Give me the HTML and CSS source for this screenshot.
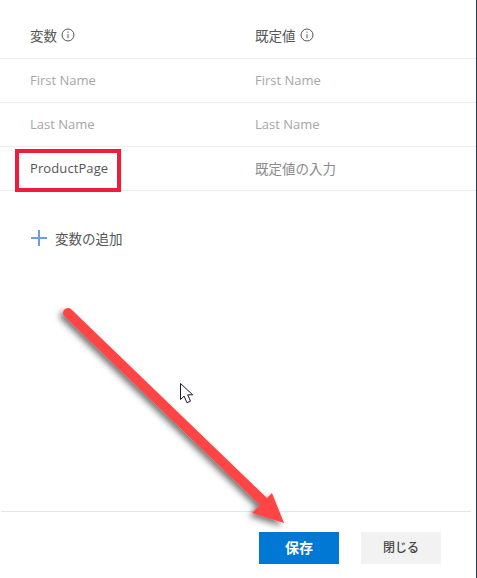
FILE: index.html
```html
<!DOCTYPE html>
<html lang="ja">
<head>
  <meta charset="UTF-8">
  <title>変数</title>
  <link rel="stylesheet" href="styles.css">
</head>
<body>
  <div class="panel">
    <div class="row head">
      <div class="cell"><span class="ja">変数</span>
        <svg class="info" viewBox="0 0 14 14"><circle cx="7" cy="7" r="6" /><path d="M7 6.2v4M7 3.6v1.2" /></svg>
      </div>
      <div class="cell"><span class="ja">既定値</span>
        <svg class="info" viewBox="0 0 14 14"><circle cx="7" cy="7" r="6" /><path d="M7 6.2v4M7 3.6v1.2" /></svg>
      </div>
    </div>
    <div class="row">
      <div class="cell hint">First Name</div>
      <div class="cell hint">First Name</div>
    </div>
    <div class="row">
      <div class="cell hint">Last Name</div>
      <div class="cell hint">Last Name</div>
    </div>
    <div class="row">
      <div class="cell value">ProductPage</div>
      <div class="cell hint dark ja">既定値の入力</div>
    </div>

    <div class="add">
      <svg class="plus" viewBox="0 0 16 16"><path d="M8 0v16M0 8h16" /></svg>
      <span class="ja">変数の追加</span>
    </div>

    <div class="footer">
      <button class="btn primary">保存</button>
      <button class="btn">閉じる</button>
    </div>
  </div>

  <!-- annotations drawn on top of the screenshot -->
  <div class="mark"></div>
  <svg class="overlay" viewBox="0 0 477 578">
    <defs>
      <filter id="shadow" x="-20%" y="-20%" width="140%" height="140%">
        <feDropShadow dx="-3" dy="3" stdDeviation="3" flood-color="#000" flood-opacity="0.55" />
      </filter>
    </defs>
    <path class="cursor" d="M180.5 383.5v16l3.6-3.4 2.8 6.6 3.6-1.5-2.8-6.4h5z" />
    <g filter="url(#shadow)">
      <path class="shaft" d="M68 313L265 503" />
      <path class="tip" d="M272 493L284 523L252 513z" />
    </g>
  </svg>
</body>
</html>
```

FILE: styles.css
```css
html, body {
  margin: 0;
  height: 100%;
  overflow: hidden;
  background: #fff;
}
body {
  position: relative;
  font-family: "Open Sans", "Noto Sans CJK JP", sans-serif;
  font-size: 13px;
  color: #555;
}
.ja {
  font-size: 13.5px;
}
.panel {
  display: flex;
  flex-direction: column;
  height: 578px;
  box-sizing: border-box;
  border-right: 1px solid #1d3a4e;
}
.row {
  display: grid;
  grid-template-columns: 225px 1fr;
  align-items: center;
  height: 44px;
  padding: 0 0 2px 30px;
  border-bottom: 1px solid #ececec;
  box-sizing: border-box;
}
.head {
  height: 59px;
  padding: 11px 0 0 30px;
}
.cell {
  display: flex;
  align-items: center;
  gap: 4px;
}
.hint {
  color: #a6a6a6;
}
.hint.dark {
  color: #8a8a8a;
}
.value {
  color: #555;
  letter-spacing: 0.1px;
}
.info {
  width: 14px;
  height: 14px;
  fill: none;
  stroke: #555;
  stroke-width: 1;
}
.add {
  display: flex;
  align-items: center;
  gap: 8px;
  margin: 38px 0 0 31px;
  height: 17px;
}
.plus {
  width: 16px;
  height: 16px;
  margin-top: 1px;
  fill: none;
  stroke: #6f9be8;
  stroke-width: 2;
}
.footer {
  display: flex;
  justify-content: flex-end;
  gap: 22px;
  margin: auto 5px 0 1px;
  padding: 20px 30px 14px 0;
  border-top: 1px solid #e6e6e6;
}
.btn {
  width: 80px;
  height: 32px;
  border: none;
  background: #f2f2f2;
  color: #444;
  font: inherit;
  font-size: 12px;
  font-weight: 500;
  padding: 0 0 2px;
}
.btn.primary {
  background: #0078d4;
  color: #fff;
  font-size: 14px;
  font-weight: 700;
}
.mark {
  position: absolute;
  left: 15px;
  top: 149px;
  width: 106px;
  height: 43px;
  box-sizing: border-box;
  border: 4px solid #ef1c3c;
}
.overlay {
  position: absolute;
  left: 0;
  top: 0;
  width: 477px;
  height: 578px;
}
.shaft {
  fill: none;
  stroke: #fe4444;
  stroke-width: 10;
  stroke-linecap: round;
}
.tip {
  fill: #fe4444;
}
.cursor {
  fill: #fff;
  stroke: #1a1a2a;
  stroke-width: 1;
}
```
